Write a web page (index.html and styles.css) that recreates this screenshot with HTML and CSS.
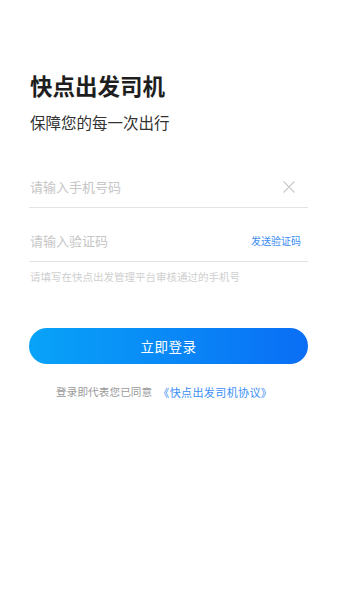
FILE: index.html
```html
<!DOCTYPE html>
<html lang="zh-CN">
<head>
<meta charset="utf-8">
<meta name="viewport" content="width=device-width, initial-scale=1">
<title>快点出发司机</title>
<link rel="stylesheet" href="styles.css">
</head>
<body>
<main class="page">
  <h1 class="title">快点出发司机</h1>
  <p class="subtitle">保障您的每一次出行</p>

  <div class="field">
    <input class="field-input" type="tel" placeholder="请输入手机号码">
    <span class="clear" aria-label="清除">
      <svg width="12" height="12" viewBox="0 0 12 12"><path d="M0.5 0.5 L11.5 11.5 M11.5 0.5 L0.5 11.5" stroke="#c9c9c9" stroke-width="1.1" fill="none"/></svg>
    </span>
  </div>

  <div class="field field-code">
    <input class="field-input" type="text" placeholder="请输入验证码">
    <span class="send">发送验证码</span>
  </div>

  <p class="hint">请填写在快点出发管理平台审核通过的手机号</p>

  <button class="login" type="button">立即登录</button>

  <p class="agree"><span class="agree-text">登录即代表您已同意</span><span class="agree-link">《快点出发司机协议》</span></p>
</main>
</body>
</html>
```
FILE: styles.css
```css
* { box-sizing: border-box; }
html, body {
  margin: 0;
  padding: 0;
  background: #ffffff;
}
body {
  font-family: "Noto Sans CJK SC", "Noto Sans", sans-serif;
  color: #222;
}
.page {
  padding: 70px 29px 0 29px;
  display: flex;
  flex-direction: column;
}
.title {
  margin: 0;
  font-size: 22.5px;
  line-height: 30px;
  font-weight: 700;
  color: #1e1e1e;
  padding-left: 1px;
}
.subtitle {
  margin: 11px 0 0 0;
  font-size: 15.5px;
  line-height: 22px;
  color: #333;
  padding-left: 1px;
}
.field {
  margin-top: 34px;
  height: 41px;
  border-bottom: 1px solid #e3e3e3;
  display: flex;
  align-items: center;
}
.field-code {
  margin-top: 13px;
}
.field-input {
  flex: 1;
  min-width: 0;
  border: none;
  outline: none;
  padding: 0 0 0 1px;
  margin: 0;
  font-family: "Noto Sans CJK SC", "Noto Sans", sans-serif;
  font-size: 13px;
  line-height: 20px;
  color: #333;
  background: transparent;
}
.field-input::placeholder {
  color: #c6c6c6;
}
.clear {
  width: 12px;
  height: 12px;
  margin-right: 13px;
  display: flex;
}
.send {
  font-size: 10px;
  line-height: 14px;
  color: #3b8ef6;
  margin-right: 7px;
}
.hint {
  margin: 7px 0 0 0;
  font-size: 10.5px;
  line-height: 16px;
  color: #cfcfcf;
  padding-left: 1px;
}
.login {
  margin-top: 43px;
  height: 36px;
  border: none;
  border-radius: 18px;
  background: linear-gradient(90deg, #08a3f8 0%, #0a6ef5 100%);
  color: #ffffff;
  font-family: "Noto Sans CJK SC", "Noto Sans", sans-serif;
  font-size: 13.5px;
  letter-spacing: 0.5px;
  padding: 0;
}
.agree {
  margin: 20px 0 0 0;
  padding-left: 27px;
  display: flex;
  align-items: center;
  font-size: 10.6px;
  line-height: 16px;
  color: #9a9a9a;
}
.agree-text {
  letter-spacing: 0.1px;
}
.agree-link {
  margin-left: 6px;
  font-size: 11px;
  letter-spacing: 0.4px;
  color: #3b8ef6;
}
```
